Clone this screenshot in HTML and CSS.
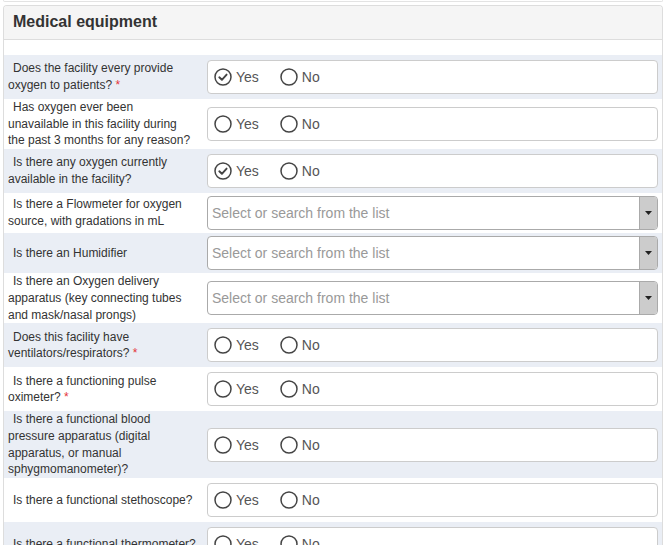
FILE: index.html
```html
<!DOCTYPE html>
<html>
<head>
<meta charset="utf-8">
<link rel="stylesheet" href="styles.css">
</head>
<body>
<div class="page">
  <div class="prev-panel"></div>
  <section class="panel">
    <h2 class="panel-heading">Medical equipment</h2>
    <div class="panel-body">

      <div class="row shaded">
        <label class="q">Does the facility every provide oxygen to patients? <span class="req">*</span></label>
        <div class="radios">
          <span class="opt"><span class="dot checked"><svg viewBox="0 0 18 18"><circle cx="9" cy="9" r="8"/><path d="M5.3 9.3 L7.9 11.8 L12.6 6.6"/></svg></span>Yes</span>
          <span class="opt"><span class="dot"><svg viewBox="0 0 18 18"><circle cx="9" cy="9" r="8"/></svg></span>No</span>
        </div>
      </div>

      <div class="row">
        <label class="q">Has oxygen ever been unavailable in this facility during the past 3 months for any reason?</label>
        <div class="radios">
          <span class="opt"><span class="dot"><svg viewBox="0 0 18 18"><circle cx="9" cy="9" r="8"/></svg></span>Yes</span>
          <span class="opt"><span class="dot"><svg viewBox="0 0 18 18"><circle cx="9" cy="9" r="8"/></svg></span>No</span>
        </div>
      </div>

      <div class="row shaded">
        <label class="q">Is there any oxygen currently available in the facility?</label>
        <div class="radios">
          <span class="opt"><span class="dot checked"><svg viewBox="0 0 18 18"><circle cx="9" cy="9" r="8"/><path d="M5.3 9.3 L7.9 11.8 L12.6 6.6"/></svg></span>Yes</span>
          <span class="opt"><span class="dot"><svg viewBox="0 0 18 18"><circle cx="9" cy="9" r="8"/></svg></span>No</span>
        </div>
      </div>

      <div class="row">
        <label class="q">Is there a Flowmeter for oxygen source, with gradations in mL</label>
        <div class="select">
          <span class="placeholder">Select or search from the list</span>
          <span class="arrow"><svg viewBox="0 0 7 4"><path d="M0 0 H7 L3.5 4 Z"/></svg></span>
        </div>
      </div>

      <div class="row shaded">
        <label class="q">Is there an Humidifier</label>
        <div class="select">
          <span class="placeholder">Select or search from the list</span>
          <span class="arrow"><svg viewBox="0 0 7 4"><path d="M0 0 H7 L3.5 4 Z"/></svg></span>
        </div>
      </div>

      <div class="row">
        <label class="q">Is there an Oxygen delivery apparatus (key connecting tubes and mask/nasal prongs)</label>
        <div class="select">
          <span class="placeholder">Select or search from the list</span>
          <span class="arrow"><svg viewBox="0 0 7 4"><path d="M0 0 H7 L3.5 4 Z"/></svg></span>
        </div>
      </div>

      <div class="row shaded">
        <label class="q">Does this facility have ventilators/respirators? <span class="req">*</span></label>
        <div class="radios">
          <span class="opt"><span class="dot"><svg viewBox="0 0 18 18"><circle cx="9" cy="9" r="8"/></svg></span>Yes</span>
          <span class="opt"><span class="dot"><svg viewBox="0 0 18 18"><circle cx="9" cy="9" r="8"/></svg></span>No</span>
        </div>
      </div>

      <div class="row">
        <label class="q">Is there a functioning pulse oximeter? <span class="req">*</span></label>
        <div class="radios">
          <span class="opt"><span class="dot"><svg viewBox="0 0 18 18"><circle cx="9" cy="9" r="8"/></svg></span>Yes</span>
          <span class="opt"><span class="dot"><svg viewBox="0 0 18 18"><circle cx="9" cy="9" r="8"/></svg></span>No</span>
        </div>
      </div>

      <div class="row shaded">
        <label class="q">Is there a functional blood pressure apparatus (digital apparatus, or manual sphygmomanometer)?</label>
        <div class="radios">
          <span class="opt"><span class="dot"><svg viewBox="0 0 18 18"><circle cx="9" cy="9" r="8"/></svg></span>Yes</span>
          <span class="opt"><span class="dot"><svg viewBox="0 0 18 18"><circle cx="9" cy="9" r="8"/></svg></span>No</span>
        </div>
      </div>

      <div class="row">
        <label class="q">Is there a functional stethoscope?</label>
        <div class="radios">
          <span class="opt"><span class="dot"><svg viewBox="0 0 18 18"><circle cx="9" cy="9" r="8"/></svg></span>Yes</span>
          <span class="opt"><span class="dot"><svg viewBox="0 0 18 18"><circle cx="9" cy="9" r="8"/></svg></span>No</span>
        </div>
      </div>

      <div class="row shaded">
        <label class="q">Is there a functional thermometer?</label>
        <div class="radios">
          <span class="opt"><span class="dot"><svg viewBox="0 0 18 18"><circle cx="9" cy="9" r="8"/></svg></span>Yes</span>
          <span class="opt"><span class="dot"><svg viewBox="0 0 18 18"><circle cx="9" cy="9" r="8"/></svg></span>No</span>
        </div>
      </div>

    </div>
  </section>
</div>
</body>
</html>
```

FILE: styles.css
```css
* { box-sizing: border-box; }

html, body {
  margin: 0;
  padding: 0;
  background: #fff;
  overflow: hidden;
}

body {
  font-family: "Liberation Sans", Arial, sans-serif;
  color: #333;
}

.page {
  padding: 0 2px 0 3px;
}

.prev-panel {
  height: 2px;
  border: 1px solid #e3e3e3;
  border-top: 0;
  border-radius: 0 0 4px 4px;
  margin-bottom: 3px;
}

.panel {
  border: 1px solid #ddd;
  border-bottom: 0;
  border-radius: 4px 4px 0 0;
}

.panel-heading {
  margin: 0;
  background: #f5f5f5;
  border-bottom: 1px solid #ddd;
  border-radius: 3px 3px 0 0;
  padding: 7px 9px 8px;
  font-size: 16px;
  line-height: 18px;
  font-weight: bold;
  color: #333;
}

.panel-body {
  padding-top: 15px;
}

.row {
  display: flex;
  align-items: center;
  padding: 0 4px;
  gap: 11px;
}

.row.shaded {
  background: #eaeef5;
}

.q {
  width: 188px;
  flex: none;
  font-size: 12px;
  line-height: 16.7px;
  text-indent: 5px;
  color: #333;
}

.req {
  color: #e4343a;
}

.radios {
  flex: 1;
  height: 34px;
  margin: 5px 0;
  background: #fff;
  border: 1px solid #ccc;
  border-radius: 4px;
  display: flex;
  align-items: center;
  padding-left: 6px;
  gap: 21px;
}

.opt {
  display: flex;
  align-items: center;
  gap: 4px;
  font-size: 14px;
  color: #555;
}

.dot {
  width: 18px;
  height: 18px;
  display: block;
}

.dot svg {
  display: block;
  width: 18px;
  height: 18px;
}

.dot circle {
  fill: #fff;
  stroke: #444;
  stroke-width: 1.5;
}

.dot path {
  fill: none;
  stroke: #444;
  stroke-width: 1.9;
  stroke-linecap: round;
  stroke-linejoin: round;
}

.select {
  flex: 1;
  height: 34px;
  margin: 3px 0;
  background: #fff;
  border: 1px solid #aaa;
  border-radius: 4px;
  display: flex;
  align-items: stretch;
  overflow: hidden;
}

.placeholder {
  flex: 1;
  display: flex;
  align-items: center;
  padding-left: 4px;
  font-size: 14px;
  color: #999;
}

.arrow {
  width: 18px;
  flex: none;
  background: #ccc;
  border-left: 1px solid #aaa;
  display: flex;
  align-items: center;
  justify-content: center;
}

.arrow svg {
  width: 7px;
  height: 4px;
  display: block;
}

.arrow path {
  fill: #222;
}
```
